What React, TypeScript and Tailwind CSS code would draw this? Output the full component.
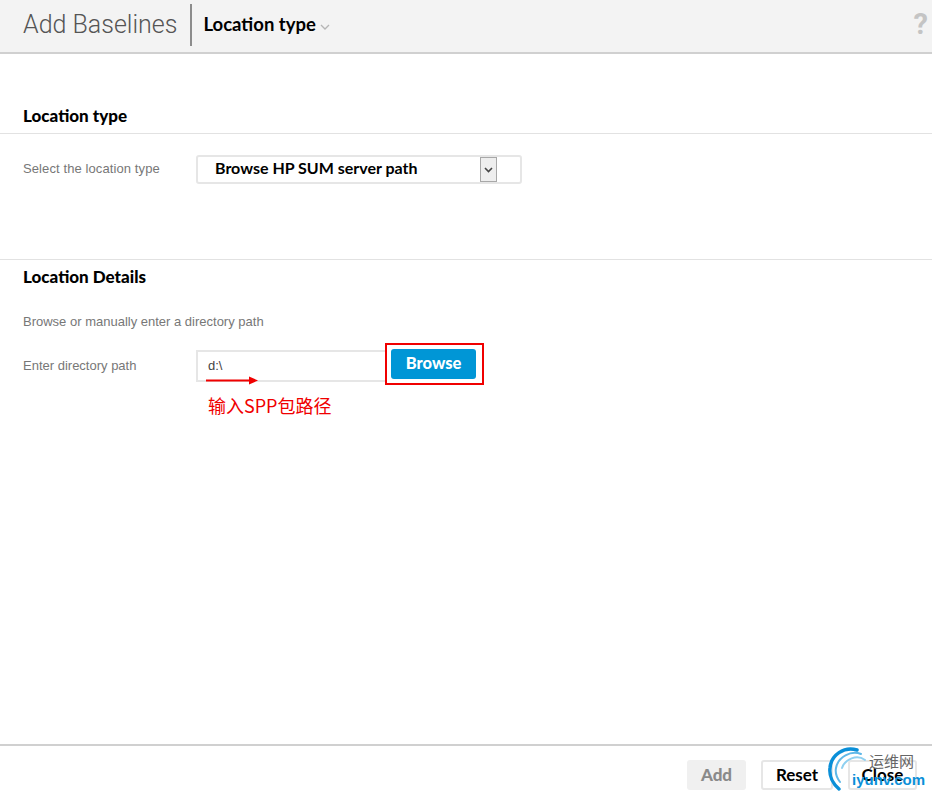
export default function App() {
  return (
    <div className="relative h-[795px] w-[932px] overflow-hidden bg-white flex flex-col font-['Roboto',sans-serif]">
      <header className="h-[54px] shrink-0 bg-[#f3f3f3] border-b-2 border-[#d0d0d0] flex items-center pl-[23px] pr-[4px] pb-[3px]">
        <h1 className="text-[25px] font-light text-[#555] leading-none">Add Baselines</h1>
        <div className="ml-[13px] h-[42px] w-[2px] bg-[#8c8c8c]" />
        <div className="ml-[11px] flex items-center text-[18.5px] font-bold text-black leading-none font-['Lato',sans-serif]">
          Location type
          <svg className="ml-[4px] mt-[5px]" width="10" height="6" viewBox="0 0 10 6" fill="none" stroke="#b5b5b5" strokeWidth="1.3"><path d="M1 1l4 4 4-4" /></svg>
        </div>
        <span className="ml-auto text-[29px] font-bold text-[#c4c4c4] leading-none">?</span>
      </header>

      <main className="flex-1 flex flex-col">
        <section className="pt-[50px] h-[206px] border-b border-[#e2e2e2]">
          <h2 className="pl-[23px] pb-[6px] text-[17px] leading-[23px] font-black text-black border-b border-[#e2e2e2] font-['Lato',sans-serif]">Location type</h2>
          <div className="mt-[21px] pl-[23px] flex items-center">
            <span className="w-[173px] text-[13px] leading-[16px] pb-[2px] tracking-[0.1px] text-[#777] font-['Liberation_Sans',sans-serif]">Select the location type</span>
            <div className="w-[326px] h-[29px] rounded-[3px] border-2 border-[#e6e6e6] flex items-center pl-[17px] pr-[23px]">
              <span className="flex-1 text-[16px] leading-[20px] pb-[3px] font-bold text-black font-['Lato',sans-serif]">Browse HP SUM server path</span>
              <span className="w-[17px] h-[25px] border border-[#a8a8a8] bg-[#eeeeee] flex items-center justify-center">
                <svg width="9" height="6" viewBox="0 0 9 6" fill="none" stroke="#444" strokeWidth="1.6"><path d="M1 1l3.5 3.5L8 1" /></svg>
              </span>
            </div>
          </div>
        </section>

        <section className="pt-[5px]">
          <h2 className="pl-[23px] text-[17px] leading-[23px] font-black text-black font-['Lato',sans-serif]">Location Details</h2>
          <p className="mt-[26px] pl-[23px] text-[13px] leading-[16px] text-[#777] font-['Liberation_Sans',sans-serif]">Browse or manually enter a directory path</p>
          <div className="mt-[20px] pl-[23px] flex items-center">
            <span className="w-[173px] text-[13px] text-[#777] font-['Liberation_Sans',sans-serif]">Enter directory path</span>
            <div className="w-[191px] h-[32px] border-2 border-[#e6e6e6] pl-[10px] flex items-center text-[13px] text-[#444] font-['Liberation_Sans',sans-serif]">d:\</div>
            <button className="ml-[4px] -mt-[5px] w-[85px] h-[30px] rounded-[3px] bg-[#0096d6] text-white text-[16.5px] font-black font-['Lato',sans-serif]">Browse</button>
          </div>
        </section>
      </main>

      <footer className="h-[51px] shrink-0 border-t-2 border-[#d0d0d0] flex justify-end items-start pt-[14px] pr-[15px] gap-[15px] font-['Lato',sans-serif]">
        <button className="w-[59px] h-[30px] rounded-[3px] bg-[#f0f0f0] text-[#8a8a8a] text-[17px] font-black">Add</button>
        <button className="w-[72px] h-[30px] rounded-[3px] border-2 border-[#e6e6e6] text-black text-[17px] font-bold">Reset</button>
        <button className="w-[69px] h-[30px] rounded-[3px] border-2 border-[#e6e6e6] text-black text-[17px] font-bold">Close</button>
      </footer>

      {/* annotations */}
      <div className="absolute left-[385px] top-[343px] w-[99px] h-[42px] border-2 border-[#f00000]" />
      <svg className="absolute left-[205px] top-[374px]" width="56" height="14" viewBox="0 0 56 14">
        <path d="M1 6.5h45" stroke="#f00000" strokeWidth="2" />
        <path d="M44 2.5l9 4-9 4z" fill="#f00000" />
      </svg>
      <span className="absolute left-[208px] top-[393px] text-[18px] leading-[24px] text-[#f00000] font-['Noto_Sans_CJK_SC',sans-serif]">输入SPP包路径</span>

      {/* watermark */}
      <svg className="absolute left-[827px] top-[747px]" width="46" height="46" viewBox="0 0 46 46" fill="none" strokeLinecap="round">
        <path d="M30 3C17 -1 4 8 3 21c-1 8 3 16 9 21" stroke="#0a8fd8" strokeWidth="3.5" />
        <path d="M34 7C24 3 11 10 9 21c-1 5 1 10 4 14" stroke="#5fb8e8" strokeWidth="2" />
        <path d="M38 13C30 7 18 12 15 21" stroke="#8fd0f0" strokeWidth="2" />
      </svg>
      <span className="absolute left-[869px] top-[751px] text-[15px] leading-[20px] text-[#666] font-['Noto_Sans_CJK_SC',sans-serif]">运维网</span>
      <span className="absolute left-[852px] top-[770px] text-[15px] leading-[20px] font-bold text-[#0a8fd8] font-['Liberation_Sans',sans-serif]">iyunv.com</span>
    </div>
  );
}
